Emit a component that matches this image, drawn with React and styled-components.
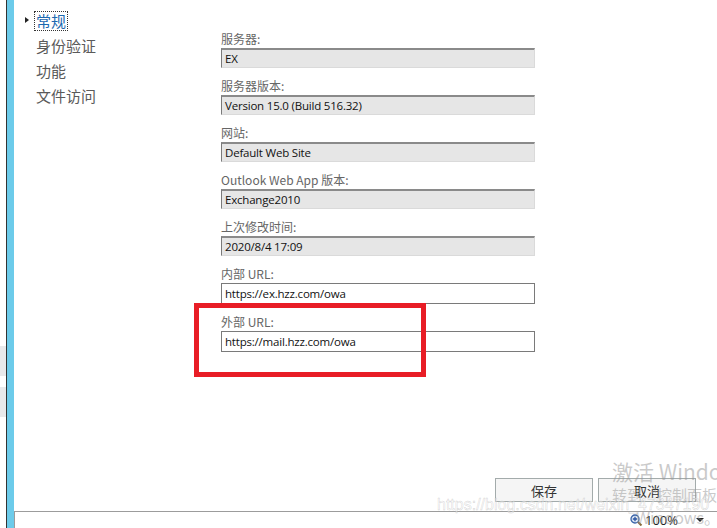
import React from 'react';
import styled, { createGlobalStyle } from 'styled-components';

const GlobalStyle = createGlobalStyle`
  html, body {
    margin: 0;
    padding: 0;
    background: #fff;
  }
  body {
    font-family: "Noto Sans CJK SC", "Noto Sans", sans-serif;
  }
`;

const Page = styled.div`
  position: relative;
  display: flex;
  width: 717px;
  height: 528px;
  overflow: hidden;
  background: #fff;
`;

const EdgeStrip = styled.div`
  width: 6px;
  display: flex;
  flex-direction: column;
  gap: 11px;
  padding-top: 346px;
`;

const EdgeBlock = styled.div`
  height: 30px;
  background: #e8e9eb;
`;

const Divider = styled.div`
  width: 1px;
  background: #333;
`;

const BlueBar = styled.div`
  width: 7px;
  background: #6ccbea;
`;

const Main = styled.div`
  flex: 1;
  display: flex;
  flex-direction: column;
`;

const Content = styled.div`
  position: relative;
  flex: 1;
  display: flex;
`;

const Nav = styled.ul`
  width: 207px;
  margin: 0;
  padding: 8px 0 0 20px;
  box-sizing: border-box;
  list-style: none;
`;

const NavItem = styled.li`
  position: relative;
  height: 25px;
  display: flex;
  align-items: center;
  font-size: 15px;
  color: ${(p) => (p.active ? '#1b68b0' : '#5a5a5a')};

  span {
    padding: 0 1px;
    line-height: 18px;
    border: 1px dotted ${(p) => (p.active ? '#333' : 'transparent')};
  }
`;

const Arrow = styled.i`
  position: absolute;
  left: -9px;
  top: 9px;
  width: 0;
  height: 0;
  border-top: 3.5px solid transparent;
  border-bottom: 3.5px solid transparent;
  border-left: 4px solid #222;
`;

const Form = styled.div`
  width: 314px;
  padding-top: 31px;
`;

const Group = styled.div`
  margin-bottom: 10px;
`;

const Label = styled.div`
  height: 16px;
  line-height: 16px;
  margin-bottom: 1px;
  font-size: 12px;
  color: #666;
  white-space: nowrap;
`;

const Field = styled.div`
  box-sizing: border-box;
  height: ${(p) => (p.readOnly ? '20px' : '21px')};
  padding: 0 3px;
  display: flex;
  align-items: center;
  font-family: "Open Sans", "Noto Sans", sans-serif;
  font-size: 11.5px;
  letter-spacing: -0.2px;
  color: #111;
  white-space: nowrap;
  background: ${(p) => (p.readOnly ? '#e6e6e6' : '#fff')};
  border: 1px solid ${(p) => (p.readOnly ? '#dadada' : '#7a7a7a')};
  ${(p) =>
    p.readOnly &&
    `
    border-top: 2px solid #8a8a8a;
    border-left: 1px solid #7a7a7a;
  `}
`;

const Highlight = styled.div`
  position: absolute;
  left: 180px;
  top: 303px;
  width: 232px;
  height: 74px;
  box-sizing: border-box;
  border: 5px solid #e81d26;
`;

const Footer = styled.div`
  display: flex;
  justify-content: flex-end;
  gap: 5px;
  padding: 0 21px 9px 0;
`;

const Button = styled.button`
  width: 98px;
  height: 24px;
  padding: 0;
  background: #f5f5f5;
  border: 1px solid #a3abab;
  font-family: "Noto Sans CJK SC", sans-serif;
  font-size: 13px;
  color: #333;
`;

const StatusBar = styled.div`
  height: 17px;
  box-sizing: border-box;
  border-top: 1px solid #9c9c9c;
  border-left: 1px solid #9c9c9c;
  display: flex;
  align-items: center;
  justify-content: flex-end;
  padding-right: 13px;
  font-family: "Open Sans", sans-serif;
  font-size: 13px;
  color: #222;
`;

const Zoom = styled.span`
  display: flex;
  align-items: center;
  gap: 2px;
  margin-right: 18px;
`;

const DropTriangle = styled.i`
  width: 0;
  height: 0;
  border-left: 4px solid transparent;
  border-right: 4px solid transparent;
  border-top: 4px solid #222;
`;

const Watermark = styled.div`
  position: absolute;
  left: ${(p) => p.x}px;
  top: ${(p) => p.y}px;
  font-size: ${(p) => p.size}px;
  color: rgba(150, 150, 150, 0.5);
  white-space: nowrap;
  pointer-events: none;
  line-height: 1;
  font-family: "Noto Sans CJK SC", "Noto Sans", sans-serif;
`;

const CsdnMark = styled(Watermark)`
  color: rgba(255, 255, 255, 0.5);
  -webkit-text-stroke: 0.5px rgba(160, 160, 160, 0.45);
  font-family: "Liberation Sans", sans-serif;
`;

const fields = [
  { label: '服务器:', value: 'EX', readOnly: true },
  { label: '服务器版本:', value: 'Version 15.0 (Build 516.32)', readOnly: true },
  { label: '网站:', value: 'Default Web Site', readOnly: true },
  { label: 'Outlook Web App 版本:', value: 'Exchange2010', readOnly: true },
  { label: '上次修改时间:', value: '2020/8/4 17:09', readOnly: true },
  { label: '内部 URL:', value: 'https://ex.hzz.com/owa' },
  { label: '外部 URL:', value: 'https://mail.hzz.com/owa' },
];

const navItems = ['常规', '身份验证', '功能', '文件访问'];

const ZoomIcon = () => (
  <svg width="13" height="12" viewBox="0 0 13 12">
    <circle cx="5" cy="5" r="4" fill="#dfe8f5" stroke="#3a64a8" strokeWidth="1.3" />
    <path d="M5 2.8v4.4M2.8 5h4.4" stroke="#2a54a0" strokeWidth="1.3" />
    <path d="M8 8l3.5 3.5" stroke="#8a6a3a" strokeWidth="2" />
  </svg>
);

const App = () => {
  return (
    <>
      <GlobalStyle />
      <Page>
        <EdgeStrip>
          <EdgeBlock />
          <EdgeBlock />
        </EdgeStrip>
        <Divider />
        <BlueBar />
        <Main>
          <Content>
            <Nav>
              {navItems.map((item, index) => (
                <NavItem key={item} active={index === 0}>
                  {index === 0 && <Arrow />}
                  <span>{item}</span>
                </NavItem>
              ))}
            </Nav>
            <Form>
              {fields.map((f) => (
                <Group key={f.label}>
                  <Label>{f.label}</Label>
                  <Field readOnly={f.readOnly}>{f.value}</Field>
                </Group>
              ))}
            </Form>
            <Highlight />
          </Content>
          <Footer>
            <Button>保存</Button>
            <Button>取消</Button>
          </Footer>
          <StatusBar>
            <Zoom>
              <ZoomIcon />
              100%
            </Zoom>
            <DropTriangle />
          </StatusBar>
        </Main>
        <Watermark x={612} y={461} size={21}>激活 Windows</Watermark>
        <Watermark x={612} y={487} size={15}>转到“控制面板”中的“系统”以激活</Watermark>
        <Watermark x={636} y={509} size={16}>Windows。</Watermark>
        <CsdnMark x={437} y={497} size={16}>https://blog.csdn.net/weixin_47347190</CsdnMark>
      </Page>
    </>
  );
};

export default App;
